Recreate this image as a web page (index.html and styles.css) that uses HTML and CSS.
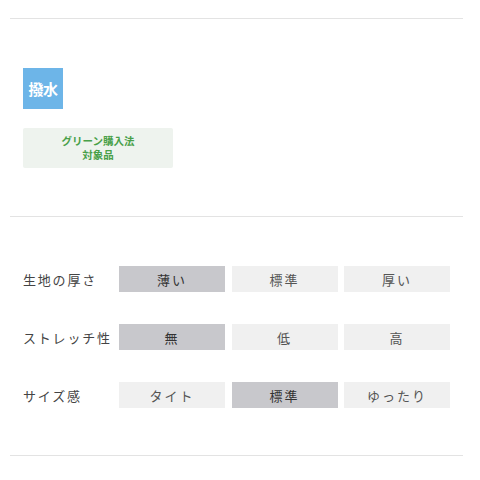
FILE: index.html
```html
<!DOCTYPE html>
<html lang="ja">
<head>
<meta charset="utf-8">
<link rel="stylesheet" href="styles.css">
</head>
<body>
<div class="wrap">
  <div class="rule"></div>
  <section class="badges">
    <div class="badge-blue">撥水</div>
    <div class="badge-green">グリーン購入法<br>対象品</div>
  </section>
  <div class="rule"></div>
  <section class="specs">
    <div class="row">
      <div class="label">生地の厚さ</div>
      <div class="opts">
        <div class="opt on">薄い</div>
        <div class="opt">標準</div>
        <div class="opt">厚い</div>
      </div>
    </div>
    <div class="row">
      <div class="label">ストレッチ性</div>
      <div class="opts">
        <div class="opt on">無</div>
        <div class="opt">低</div>
        <div class="opt">高</div>
      </div>
    </div>
    <div class="row">
      <div class="label">サイズ感</div>
      <div class="opts">
        <div class="opt">タイト</div>
        <div class="opt on">標準</div>
        <div class="opt">ゆったり</div>
      </div>
    </div>
  </section>
  <div class="rule"></div>
</div>
</body>
</html>
```
FILE: styles.css
```css
html, body {
  margin: 0;
  padding: 0;
  background: #fff;
}
body {
  font-family: "Noto Sans CJK JP", "Noto Sans", sans-serif;
  color: #333;
}
.wrap {
  width: 453px;
  margin-left: 10px;
  padding-top: 18px;
}
.rule {
  height: 1px;
  background: #e3e3e3;
}
.badges {
  padding: 49px 0 48px 13px;
  display: flex;
  flex-direction: column;
  align-items: flex-start;
  gap: 19px;
}
.badge-blue {
  width: 40px;
  height: 41px;
  background: #6db5e8;
  color: #fff;
  font-weight: bold;
  font-size: 15px;
  display: flex;
  align-items: center;
  justify-content: center;
  letter-spacing: -0.5px;
}
.badge-green {
  width: 150px;
  height: 40px;
  background: #eef3ee;
  border-radius: 2px;
  color: #48a048;
  font-weight: bold;
  font-size: 10.5px;
  line-height: 14px;
  text-align: center;
  display: flex;
  align-items: center;
  justify-content: center;
}
.specs {
  padding: 49px 0 47px 13px;
  display: flex;
  flex-direction: column;
  gap: 32px;
}
.row {
  display: flex;
  align-items: center;
  height: 26px;
}
.label {
  width: 96px;
  font-size: 13px;
  letter-spacing: 1.8px;
  color: #444;
  white-space: nowrap;
}
.opts {
  display: flex;
  gap: 6.5px;
}
.opt {
  width: 106px;
  height: 26px;
  background: #f0f0f0;
  color: #555;
  font-size: 13px;
  letter-spacing: 2px;
  display: flex;
  align-items: center;
  justify-content: center;
}
.opt.on {
  background: #c8c8cc;
  color: #333;
}
```
